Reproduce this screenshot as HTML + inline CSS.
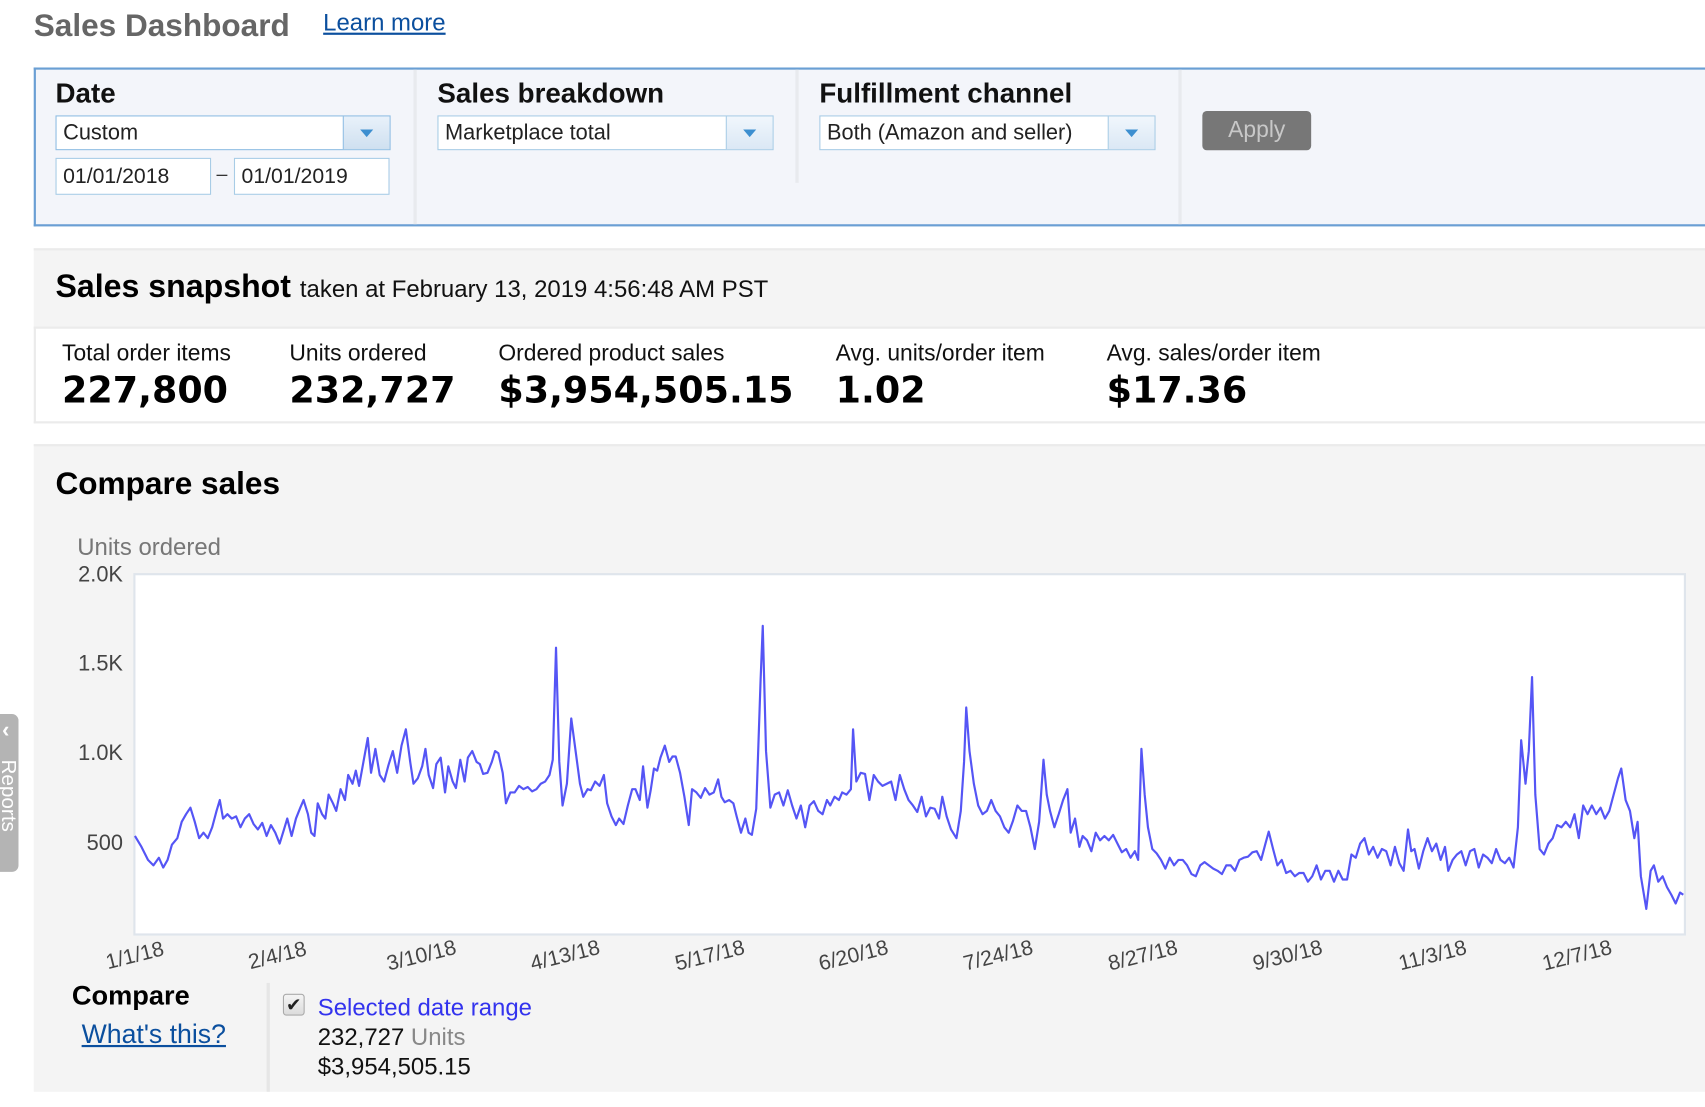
<!DOCTYPE html>
<html><head><meta charset="utf-8"><style>
html,body{margin:0;padding:0;background:#fff;overflow:hidden;width:1705px;height:1107px}
#w{position:absolute;left:0;top:0;width:1567px;height:1017px;transform:scale(1.0881,1.0885);transform-origin:0 0;font-family:"Liberation Sans",Arial,sans-serif;color:#111}
.a{position:absolute;white-space:nowrap}
.sel{position:absolute;height:32px;border:1px solid #a8cce6;background:#fff;box-sizing:border-box;font-size:20px;line-height:31px;padding-left:6px;color:#222}
.sel .ar{position:absolute;right:0;top:0;bottom:0;width:42px;border-left:1px solid #a8cce6;background:linear-gradient(#f0f6fc,#dbe8f5)}
.sel .ar:after{content:"";position:absolute;left:15px;top:12px;border-left:6px solid transparent;border-right:6px solid transparent;border-top:7px solid #3d8fd0}
.lbl{font-size:21px;color:#111}
.val{font-family:"DejaVu Sans",sans-serif;font-weight:bold;font-size:33.5px;color:#000}
.xl{position:absolute;font-size:19.5px;color:#444;transform:rotate(-14deg);transform-origin:center}
</style></head><body><div id="w">
<div class="a" style="left:31px;top:8px;font-size:29px;font-weight:bold;color:#666">Sales Dashboard</div>
<div class="a" style="left:297px;top:8px;font-size:22px;color:#0b4f9e;text-decoration:underline">Learn more</div>

<div class="a" style="left:31px;top:62px;width:1540px;height:146px;box-sizing:border-box;border:2px solid #6a9fd4;border-right:none;background:#f3f5fa"></div>
<div class="a" style="left:380px;top:64px;width:3px;height:142px;background:#e8eaee"></div>
<div class="a" style="left:731px;top:64px;width:3px;height:104px;background:#e8eaee"></div>
<div class="a" style="left:1083px;top:64px;width:3px;height:142px;background:#e8eaee"></div>
<div class="a" style="left:51px;top:72px;font-size:25.5px;font-weight:bold">Date</div>
<div class="sel" style="left:51px;top:106px;width:308px;border-color:#8fbde3">Custom<div class="ar" style="background:linear-gradient(#e8f1fa,#cfe0f0);border-left-color:#8fbde3"></div></div>
<div class="sel" style="left:51px;top:145px;width:143px;height:34px;line-height:32px;font-size:19.5px">01/01/2018</div>
<div class="a" style="left:199px;top:150px;font-size:18px;color:#333">–</div>
<div class="sel" style="left:215px;top:145px;width:143px;height:34px;line-height:32px;font-size:19.5px">01/01/2019</div>
<div class="a" style="left:402px;top:72px;font-size:25.5px;font-weight:bold">Sales breakdown</div>
<div class="sel" style="left:402px;top:106px;width:309px">Marketplace total<div class="ar"></div></div>
<div class="a" style="left:753px;top:72px;font-size:25.5px;font-weight:bold">Fulfillment channel</div>
<div class="sel" style="left:753px;top:106px;width:309px">Both (Amazon and seller)<div class="ar"></div></div>
<div class="a" style="left:1105px;top:102px;width:100px;height:36px;background:#777;border-radius:4px;color:#c8c8c8;font-size:21px;text-align:center;line-height:36px">Apply</div>

<div class="a" style="left:31px;top:228px;width:1540px;height:72px;background:#f4f4f4;border-top:2px solid #ebebeb;box-sizing:border-box"></div>
<div class="a" style="left:31px;top:300px;width:1540px;height:89px;background:#fff;border:2px solid #ebebeb;border-right:none;box-sizing:border-box"></div>
<div class="a" style="left:51px;top:247px;font-size:29.5px;font-weight:bold;color:#000">Sales snapshot <span style="font-size:22px;font-weight:normal;color:#111">taken at February 13, 2019 4:56:48 AM PST</span></div>
<div class="a lbl" style="left:57px;top:313px">Total order items</div>
<div class="a lbl" style="left:266px;top:313px">Units ordered</div>
<div class="a lbl" style="left:458px;top:313px">Ordered product sales</div>
<div class="a lbl" style="left:768px;top:313px">Avg. units/order item</div>
<div class="a lbl" style="left:1017px;top:313px">Avg. sales/order item</div>
<div class="a val" style="left:57px;top:339px">227,800</div>
<div class="a val" style="left:266px;top:339px">232,727</div>
<div class="a val" style="left:458px;top:339px">$3,954,505.15</div>
<div class="a val" style="left:768px;top:339px">1.02</div>
<div class="a val" style="left:1017px;top:339px">$17.36</div>

<div class="a" style="left:31px;top:408px;width:1540px;height:595px;background:#f4f4f4;border-top:2px solid #ebebeb;box-sizing:border-box"></div>
<div class="a" style="left:51px;top:429px;font-size:29px;font-weight:bold;color:#000">Compare sales</div>
<div class="a" style="left:71px;top:490px;font-size:22px;color:#777">Units ordered</div>
<div class="a" style="left:58px;top:517px;width:55px;text-align:right;font-size:20px;color:#444">2.0K</div>
<div class="a" style="left:58px;top:599px;width:55px;text-align:right;font-size:20px;color:#444">1.5K</div>
<div class="a" style="left:58px;top:681px;width:55px;text-align:right;font-size:20px;color:#444">1.0K</div>
<div class="a" style="left:58px;top:764px;width:55px;text-align:right;font-size:20px;color:#444">500</div>
<svg class="a" style="left:0;top:0" width="1567" height="1017">
<rect x="123.5" y="527.5" width="1425" height="331" fill="#fff" stroke="#dfe5ec" stroke-width="2"/>
<polyline fill="none" stroke="#5555f5" stroke-width="2" stroke-linejoin="round" points="124,768 130,778 136,790 141,795 146,788 150,797 154,790 158,776 163,770 167,755 171,748 175,742 179,755 183,770 187,765 191,770 195,760 199,745 202,735 205,752 209,748 213,752 217,750 221,760 225,752 229,748 233,757 237,762 241,756 245,768 249,758 253,765 257,775 261,762 264,752 268,768 272,752 276,742 279,735 283,748 286,765 289,768 292,738 296,748 299,752 302,730 306,738 309,745 313,725 317,735 320,712 324,720 327,708 330,722 334,700 338,678 341,710 345,688 349,712 353,718 357,703 361,690 365,710 369,685 373,670 377,700 380,720 384,715 388,704 391,688 394,712 398,724 401,702 405,696 409,728 412,704 416,718 419,724 423,698 427,718 430,696 434,690 438,700 441,702 444,711 448,710 452,700 455,690 458,692 462,710 465,738 469,728 473,728 477,722 481,725 485,723 489,727 493,725 497,720 501,718 505,712 508,698 511,595 514,700 517,740 521,720 525,660 529,690 533,720 536,732 540,725 543,726 547,718 551,722 555,712 558,738 562,750 566,758 569,752 573,757 577,740 581,725 584,725 588,735 591,704 595,742 598,726 601,706 604,708 607,696 611,685 615,700 618,695 621,695 625,710 629,732 633,758 636,725 640,728 644,733 648,724 652,730 656,728 660,716 663,732 666,737 670,735 674,738 677,750 681,765 685,752 688,765 691,767 695,743 699,625 701,575 704,690 708,742 712,730 716,728 720,740 724,726 728,740 732,752 736,740 740,760 744,740 748,736 752,745 756,748 760,735 763,740 767,732 771,735 774,728 778,730 782,725 784,670 787,718 791,710 795,711 799,735 803,712 807,718 811,722 815,720 819,718 823,735 827,712 831,725 835,735 839,740 843,746 847,732 851,750 855,742 859,743 863,752 866,732 870,750 874,762 879,770 883,745 886,700 888,650 891,690 895,720 899,740 903,748 907,745 911,735 915,745 919,750 923,760 927,765 931,754 935,740 939,745 943,745 947,760 951,780 955,755 959,698 962,730 965,745 969,760 973,748 977,735 981,725 984,765 988,752 992,778 995,768 999,772 1003,782 1007,765 1011,772 1015,768 1019,772 1023,767 1027,775 1031,783 1035,780 1039,788 1043,782 1046,790 1049,688 1052,730 1055,760 1059,780 1063,784 1067,790 1071,798 1075,788 1079,795 1083,790 1087,790 1091,795 1095,803 1099,805 1103,795 1107,792 1111,795 1115,798 1119,800 1123,803 1127,795 1131,795 1135,800 1139,790 1143,788 1147,787 1151,783 1155,782 1159,790 1163,775 1166,764 1170,780 1174,795 1178,790 1182,802 1186,800 1190,805 1194,802 1198,802 1202,810 1206,805 1210,795 1214,808 1218,800 1222,800 1226,810 1230,800 1234,808 1238,808 1242,785 1246,788 1250,775 1254,770 1258,785 1262,778 1266,788 1270,780 1274,782 1278,795 1282,778 1286,793 1290,800 1294,762 1297,782 1300,780 1304,798 1308,782 1312,770 1316,782 1320,775 1324,790 1328,778 1331,800 1335,790 1339,785 1343,782 1347,795 1351,782 1355,780 1359,797 1363,785 1367,788 1371,793 1375,780 1379,790 1383,793 1387,788 1391,797 1395,760 1398,680 1402,720 1405,690 1408,622 1411,730 1415,780 1419,785 1423,775 1427,770 1431,758 1435,760 1439,755 1443,760 1447,748 1451,770 1455,740 1459,748 1463,740 1467,748 1471,742 1475,752 1479,745 1483,730 1487,715 1490,706 1494,735 1498,745 1502,770 1505,755 1508,805 1513,835 1517,800 1520,795 1524,810 1528,805 1532,815 1536,822 1540,830 1544,820 1547,822"/>
</svg>
<div class="xl" style="left:97px;top:867px">1/1/18</div>
<div class="xl" style="left:228px;top:867px">2/4/18</div>
<div class="xl" style="left:355px;top:867px">3/10/18</div>
<div class="xl" style="left:487px;top:867px">4/13/18</div>
<div class="xl" style="left:620px;top:867px">5/17/18</div>
<div class="xl" style="left:752px;top:867px">6/20/18</div>
<div class="xl" style="left:885px;top:867px">7/24/18</div>
<div class="xl" style="left:1018px;top:867px">8/27/18</div>
<div class="xl" style="left:1151px;top:867px">9/30/18</div>
<div class="xl" style="left:1285px;top:867px">11/3/18</div>
<div class="xl" style="left:1417px;top:867px">12/7/18</div>

<div class="a" style="left:66px;top:901px;font-size:25px;font-weight:bold;color:#000">Compare</div>
<div class="a" style="left:75px;top:937px;font-size:24.5px;color:#0b4f9e;text-decoration:underline">What's this?</div>
<div class="a" style="left:245px;top:903px;width:3px;height:100px;background:#e6e6e6"></div>
<div class="a" style="left:260px;top:913px;width:20px;height:20px;border:1px solid #aaa;border-radius:3px;background:linear-gradient(#f4f4f4,#dcdcdc);box-sizing:border-box;font-size:17px;line-height:19px;text-align:center;color:#222">✔</div>
<div class="a" style="left:292px;top:913px;font-size:22px;color:#3333ee">Selected date range</div>
<div class="a" style="left:292px;top:940px;font-size:22px;color:#111">232,727 <span style="color:#888">Units</span></div>
<div class="a" style="left:292px;top:967px;font-size:22px;color:#111">$3,954,505.15</div>

<div class="a" style="left:-4px;top:656px;width:21px;height:145px;background:#b4b4b4;border-radius:0 6px 6px 0;overflow:hidden">
<div style="position:absolute;left:6px;top:4px;color:#fff;font-size:20px;font-weight:bold">‹</div>
<div style="position:absolute;left:-34px;top:64px;transform:rotate(90deg);color:#fff;font-size:19px;width:90px;text-align:center">Reports</div>
</div>
</div></body></html>
